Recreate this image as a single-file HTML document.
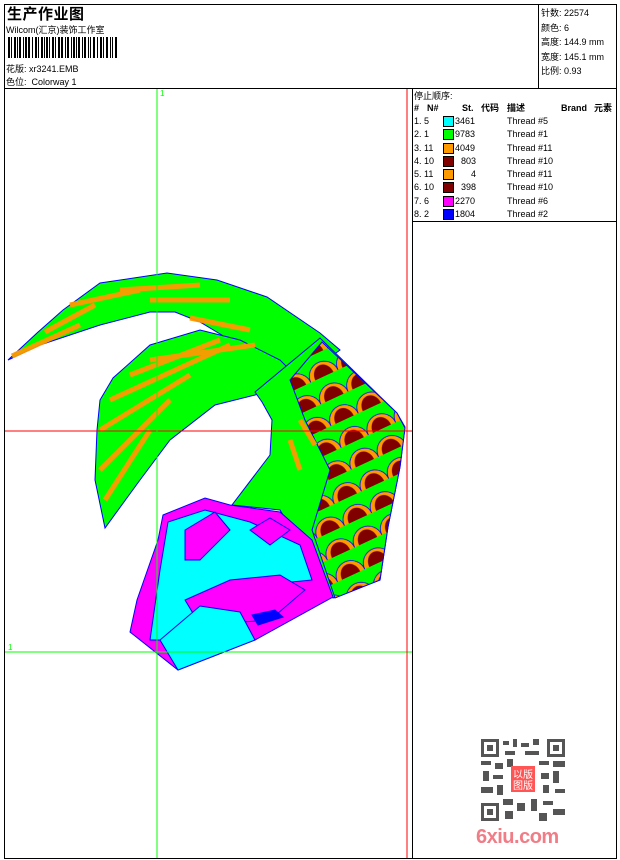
<!DOCTYPE html>
<html><head><meta charset="utf-8"><style>
body{margin:0;width:620px;height:860px;background:#fff;position:relative;overflow:hidden;font-family:"Liberation Sans","Noto Sans CJK SC",sans-serif;font-size:9px;color:#000}
.a{position:absolute;white-space:nowrap}
.b{position:absolute;background:#000}
.h span{position:absolute;top:0;line-height:12px;white-space:nowrap}
</style></head><body>
<!-- borders -->
<div class="b" style="left:4px;top:4px;width:613px;height:1px"></div>
<div class="b" style="left:4px;top:4px;width:1px;height:855px"></div>
<div class="b" style="left:616px;top:4px;width:1px;height:855px"></div>
<div class="b" style="left:4px;top:858px;width:613px;height:1px"></div>
<div class="b" style="left:4px;top:88px;width:613px;height:1px"></div>
<div class="b" style="left:538px;top:4px;width:1px;height:84px"></div>
<div class="b" style="left:412px;top:88px;width:1px;height:771px"></div>
<div class="b" style="left:412px;top:221px;width:205px;height:1px"></div>

<div class="a" style="left:7px;top:3px;font-size:15px;font-weight:bold;letter-spacing:0.5px">生产作业图</div>
<div class="a" style="left:6px;top:23px">Wilcom(汇京)装饰工作室</div>
<svg class="a" style="left:8px;top:37px" width="112" height="21">
<g fill="#000">
<rect x="0" y="0" width="2" height="21"/><rect x="3" y="0" width="1" height="21"/><rect x="6" y="0" width="2" height="21"/><rect x="9" y="0" width="1" height="21"/><rect x="11" y="0" width="2" height="21"/><rect x="15" y="0" width="1" height="21"/><rect x="17" y="0" width="2" height="21"/><rect x="20" y="0" width="2" height="21"/><rect x="24" y="0" width="1" height="21"/><rect x="27" y="0" width="2" height="21"/><rect x="30" y="0" width="1" height="21"/><rect x="33" y="0" width="2" height="21"/><rect x="36" y="0" width="1" height="21"/><rect x="38" y="0" width="2" height="21"/><rect x="41" y="0" width="1" height="21"/><rect x="44" y="0" width="2" height="21"/><rect x="47" y="0" width="1" height="21"/><rect x="50" y="0" width="2" height="21"/><rect x="53" y="0" width="2" height="21"/><rect x="57" y="0" width="1" height="21"/><rect x="59" y="0" width="2" height="21"/><rect x="63" y="0" width="1" height="21"/><rect x="65" y="0" width="2" height="21"/><rect x="68" y="0" width="1" height="21"/><rect x="70" y="0" width="2" height="21"/><rect x="74" y="0" width="1" height="21"/><rect x="76" y="0" width="2" height="21"/><rect x="80" y="0" width="1" height="21"/><rect x="82" y="0" width="1" height="21"/><rect x="85" y="0" width="2" height="21"/><rect x="89" y="0" width="1" height="21"/><rect x="92" y="0" width="2" height="21"/><rect x="95" y="0" width="1" height="21"/><rect x="98" y="0" width="2" height="21"/><rect x="102" y="0" width="1" height="21"/><rect x="104" y="0" width="1" height="21"/><rect x="107" y="0" width="2" height="21"/>
</g></svg>
<div class="a" style="left:6px;top:62px">花版: xr3241.EMB</div>
<div class="a" style="left:6px;top:75px">色位: &nbsp;Colorway 1</div>

<div class="a" style="left:541px;top:6px;line-height:14.5px">针数: 22574<br>颜色: 6<br>高度: 144.9 mm<br>宽度: 145.1 mm<br>比例: 0.93</div>

<!-- thread table -->
<div class="a" style="left:414px;top:89px">停止顺序:</div>
<div class="a h" style="left:414px;top:102px;font-weight:bold;text-decoration:underline;width:202px;height:12px">
<span style="left:0">#</span><span style="left:13px">N#</span><span style="left:48px">St.</span><span style="left:67px">代码</span><span style="left:93px">描述</span><span style="left:147px">Brand</span><span style="left:180px">元素</span></div>
<div class="a" style="left:414px;top:115px;line-height:13.3px;width:200px">
<div style="position:relative;height:13.3px"><span class="a">1. 5</span><span class="a" style="left:29px;top:1px;width:9px;height:9px;border:1px solid #000;background:#0ff"></span><span class="a" style="left:41px">3461</span><span class="a" style="left:93px">Thread #5</span></div>
<div style="position:relative;height:13.3px"><span class="a">2. 1</span><span class="a" style="left:29px;top:1px;width:9px;height:9px;border:1px solid #000;background:#0f0"></span><span class="a" style="left:41px">9783</span><span class="a" style="left:93px">Thread #1</span></div>
<div style="position:relative;height:13.3px"><span class="a">3. 11</span><span class="a" style="left:29px;top:1px;width:9px;height:9px;border:1px solid #000;background:#f90"></span><span class="a" style="left:41px">4049</span><span class="a" style="left:93px">Thread #11</span></div>
<div style="position:relative;height:13.3px"><span class="a">4. 10</span><span class="a" style="left:29px;top:1px;width:9px;height:9px;border:1px solid #000;background:#800000"></span><span class="a" style="left:47px">803</span><span class="a" style="left:93px">Thread #10</span></div>
<div style="position:relative;height:13.3px"><span class="a">5. 11</span><span class="a" style="left:29px;top:1px;width:9px;height:9px;border:1px solid #000;background:#f90"></span><span class="a" style="left:57px">4</span><span class="a" style="left:93px">Thread #11</span></div>
<div style="position:relative;height:13.3px"><span class="a">6. 10</span><span class="a" style="left:29px;top:1px;width:9px;height:9px;border:1px solid #000;background:#800000"></span><span class="a" style="left:47px">398</span><span class="a" style="left:93px">Thread #10</span></div>
<div style="position:relative;height:13.3px"><span class="a">7. 6</span><span class="a" style="left:29px;top:1px;width:9px;height:9px;border:1px solid #000;background:#f0f"></span><span class="a" style="left:41px">2270</span><span class="a" style="left:93px">Thread #6</span></div>
<div style="position:relative;height:13.3px"><span class="a">8. 2</span><span class="a" style="left:29px;top:1px;width:9px;height:9px;border:1px solid #000;background:#00f"></span><span class="a" style="left:41px">1804</span><span class="a" style="left:93px">Thread #2</span></div>
</div>

<!-- design -->
<svg class="a" style="left:0;top:0" width="412" height="860">
<defs>
<pattern id="sc" width="30" height="24" patternUnits="userSpaceOnUse" patternTransform="rotate(-25)">
<rect width="30" height="24" fill="#0f0"/>
<path d="M0 22 A15 15 0 0 1 30 22 Z" fill="#f90"/>
<path d="M5 22 A10 12 0 0 1 25 22 Z" fill="#800000"/>
<path d="M0 22 A15 15 0 0 1 30 22" fill="none" stroke="#00f" stroke-width="0.8"/>
</pattern>
</defs>
<g stroke="#00f" stroke-width="1">
<polygon fill="#0f0" points="8,360 37,333 63,310 100,283 167,273 217,280 267,297 320,333 340,350 300,380 260,385 230,340 200,322 175,312 150,312 100,325 40,345"/>
<polygon fill="#0f0" points="105,528 95,480 97,430 100,400 113,378 150,345 200,330 240,340 280,360 300,380 255,395 215,405 170,440 140,480"/>
<polygon fill="#0f0" points="255,392 320,338 397,413 405,427 400,467 388,527 380,580 333,598 280,510 232,505 270,455 272,420 262,402"/>
<polygon fill="url(#sc)" points="322,342 397,413 405,428 400,467 388,527 380,580 335,598 312,530 330,470 305,420 290,380"/>
</g>
<g stroke="#f90" stroke-width="5" fill="none" opacity="0.95">
<path d="M12,356 L80,325"/><path d="M45,332 L95,305"/><path d="M70,305 L140,290"/><path d="M120,290 L200,285"/><path d="M150,300 L230,300"/><path d="M190,318 L250,330"/>
<path d="M105,500 L150,430"/><path d="M100,470 L170,400"/><path d="M100,430 L190,375"/><path d="M110,400 L230,345"/><path d="M130,375 L220,340"/><path d="M150,360 L255,345"/>
<path d="M300,420 L315,445"/><path d="M290,440 L300,470"/>
</g>
<g stroke="#00f" stroke-width="1">
<polygon fill="#f0f" points="163,515 205,498 230,505 280,512 312,540 333,597 255,640 178,670 130,632 137,600 158,540"/>
<polygon fill="#0ff" points="168,522 205,510 250,522 300,545 312,580 260,585 205,608 182,640 150,640 160,570"/>
<polygon fill="#f0f" points="185,600 230,580 280,575 305,590 270,620 200,625"/>
<polygon fill="#0ff" points="160,640 200,606 240,612 255,640 178,670"/>
<polygon fill="#f0f" points="185,530 215,512 230,530 200,560 185,560"/>
<polygon fill="#f0f" points="250,530 270,518 290,530 270,545"/>
<polygon fill="#00f" points="252,615 275,610 283,617 258,625"/>
</g>
<line x1="5" y1="431" x2="412" y2="431" stroke="#f00"/>
<line x1="157" y1="89" x2="157" y2="858" stroke="#0f0"/>
<line x1="5" y1="652" x2="412" y2="652" stroke="#0f0"/>
<line x1="407" y1="89" x2="407" y2="858" stroke="#f00"/>
<text x="160" y="96" fill="#0f0" font-size="8" font-family="Liberation Sans">1</text>
<text x="8" y="650" fill="#0f0" font-size="8" font-family="Liberation Sans">1</text>
</svg>

<!-- QR -->
<svg class="a" style="left:481px;top:739px" width="84" height="82">
<rect width="84" height="82" fill="#fff"/>
<g fill="#555">
<rect x="0" y="0" width="18" height="18"/><rect x="66" y="0" width="18" height="18"/><rect x="0" y="64" width="18" height="18"/>
</g>
<g fill="#fff"><rect x="3" y="3" width="12" height="12"/><rect x="69" y="3" width="12" height="12"/><rect x="3" y="67" width="12" height="12"/></g>
<g fill="#555"><rect x="6" y="6" width="6" height="6"/><rect x="72" y="6" width="6" height="6"/><rect x="6" y="70" width="6" height="6"/>
<rect x="22" y="2" width="6" height="4"/><rect x="32" y="0" width="4" height="8"/><rect x="40" y="4" width="8" height="4"/><rect x="52" y="0" width="6" height="6"/><rect x="24" y="12" width="10" height="4"/><rect x="44" y="12" width="14" height="4"/>
<rect x="0" y="22" width="10" height="4"/><rect x="14" y="24" width="8" height="6"/><rect x="26" y="20" width="6" height="8"/><rect x="58" y="22" width="10" height="4"/><rect x="72" y="22" width="12" height="6"/>
<rect x="2" y="32" width="6" height="10"/><rect x="12" y="36" width="10" height="4"/><rect x="60" y="34" width="8" height="6"/><rect x="72" y="32" width="6" height="12"/>
<rect x="0" y="48" width="12" height="6"/><rect x="16" y="46" width="6" height="10"/><rect x="62" y="46" width="6" height="8"/><rect x="74" y="50" width="10" height="4"/>
<rect x="22" y="60" width="10" height="6"/><rect x="36" y="64" width="8" height="8"/><rect x="50" y="60" width="6" height="12"/><rect x="62" y="62" width="10" height="4"/><rect x="72" y="70" width="12" height="6"/><rect x="24" y="72" width="8" height="8"/><rect x="58" y="74" width="8" height="8"/>
</g>
<rect x="30" y="27" width="24" height="26" fill="#f55"/>
<text x="32" y="39" fill="#fff" font-size="10" font-family="Noto Sans CJK SC">以版</text>
<text x="32" y="50" fill="#fff" font-size="10" font-family="Noto Sans CJK SC">图版</text>
</svg>
<div class="a" style="left:476px;top:826px;font-size:20px;font-weight:bold;color:#f07c86;letter-spacing:-0.5px">6xiu.com</div>
</body></html>
